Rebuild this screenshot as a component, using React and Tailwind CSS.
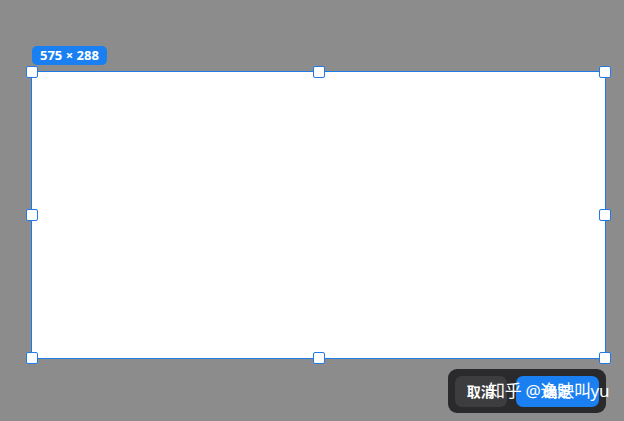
import React from 'react';

const handles = [
  'left-[-6px] top-[-6px]',
  'left-[281px] top-[-6px]',
  'right-[-6px] top-[-6px]',
  'left-[-6px] top-[137px]',
  'right-[-6px] top-[137px]',
  'left-[-6px] bottom-[-6px]',
  'left-[281px] bottom-[-6px]',
  'right-[-6px] bottom-[-6px]',
];

export default function App() {
  return (
    <div
      className="relative w-[624px] h-[421px] overflow-hidden bg-[#8c8c8c]"
      style={{ fontFamily: '"Noto Sans", "Noto Sans CJK SC", sans-serif' }}
    >
      {/* size badge */}
      <div className="absolute left-[32px] top-[46px] h-[19px] px-[8px] rounded-[5px] bg-[#1a7ff0] text-white text-[13px] font-bold leading-[19px]">
        575 × 288
      </div>

      {/* selection box */}
      <div className="absolute left-[31px] top-[71px] w-[575px] h-[288px] bg-white border border-[#1f7ae6]">
        {handles.map((pos, i) => (
          <span
            key={i}
            className={`absolute ${pos} w-[12px] h-[12px] bg-white border border-[#1f7ae6] rounded-[2px]`}
          />
        ))}
      </div>

      {/* action toolbar */}
      <div className="absolute left-[448px] top-[369px] w-[158px] h-[44px] rounded-[9px] bg-[#2a2a2c] flex items-center gap-[9px] px-[7px]">
        <button className="w-[52px] h-[31px] rounded-[7px] bg-[#3d3d3f] text-white text-[14px] font-bold">
          取消
        </button>
        <button className="w-[84px] h-[31px] rounded-[7px] bg-[#1a7ff0] text-white text-[14px] font-bold">
          确定
        </button>
      </div>

      {/* watermark */}
      <div className="absolute left-[488px] top-[379px] text-white text-[17px] leading-[24px] whitespace-nowrap tracking-[-0.3px]">
        知乎 @逸映叫yu
      </div>
    </div>
  );
}
